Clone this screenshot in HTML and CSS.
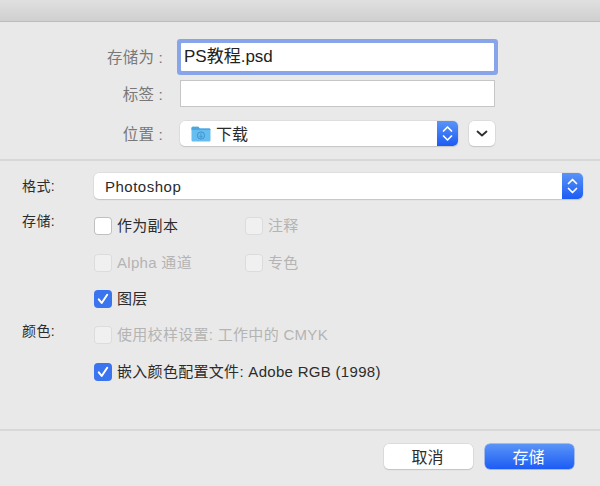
FILE: index.html
```html
<!DOCTYPE html>
<html lang="zh">
<head>
<meta charset="utf-8">
<title>存储为</title>
<link rel="stylesheet" href="styles.css">
</head>
<body>
<div class="dialog">
  <div class="titlebar"></div>
  <section class="top">
    <div class="top-row row-name">
      <span class="top-label">存储为<span class="colon">:</span></span>
      <div class="field focused">PS教程.psd</div>
    </div>
    <div class="top-row row-tag">
      <span class="top-label">标签<span class="colon">:</span></span>
      <div class="field"></div>
    </div>
    <div class="top-row row-where">
      <span class="top-label">位置<span class="colon">:</span></span>
      <div class="where-controls">
        <div class="popup where-popup">
          <svg class="folder" viewBox="0 0 20 16" width="20" height="16">
            <path d="M0.5 2.2C0.5 1.2 1 .7 2 .7h4.6c.8 0 1.1.3 1.6 1l.5.7h9.3c.9 0 1.5.5 1.5 1.5v10c0 1-.6 1.6-1.5 1.6H2c-1 0-1.5-.6-1.5-1.6z" fill="#66bdf0"/>
            <path d="M.5 4h19v-.2c0-.9-.6-1.4-1.5-1.4H8.700l-.5-.7c-.5-.7-.8-1-1.600-1H2C1 .7.500 1.200.500 2.200z" fill="#4ba6e2"/>
            <circle cx="10" cy="9.500" r="3.600" fill="none" stroke="#3f93cf" stroke-width="1"/>
            <path d="M10 7.500v3.800M8.300 9.800 10 11.500l1.700-1.700" fill="none" stroke="#3f93cf" stroke-width="1"/>
          </svg>
          <span class="popup-text where-text">下载</span>
          <span class="stepper">
            <svg viewBox="0 0 21 25" width="21" height="25"><path d="M6.500 10 10.500 6l4 4M6.500 15l4 4 4-4" fill="none" stroke="#fff" stroke-width="1.700" stroke-linecap="round" stroke-linejoin="round"/></svg>
          </span>
        </div>
        <button class="chevron-btn" type="button">
          <svg viewBox="0 0 26 25" width="26" height="25"><path d="M8.500 10.500 13 14.500l4.500-4" fill="none" stroke="#2e2e2e" stroke-width="1.800" stroke-linecap="round" stroke-linejoin="round"/></svg>
        </button>
      </div>
    </div>
  </section>
  <hr class="rule rule-top">
  <section class="options">
    <span class="opt-label">格式:</span>
    <div class="popup format-popup">
      <span class="popup-text">Photoshop</span>
      <span class="stepper">
        <svg viewBox="0 0 21 26" width="21" height="26"><path d="M6.500 10.500 10.500 6.500l4 4M6.500 15.500l4 4 4-4" fill="none" stroke="#fff" stroke-width="1.700" stroke-linecap="round" stroke-linejoin="round"/></svg>
      </span>
    </div>

    <span class="opt-label label-store">存储:</span>
    <div class="checks">
      <label class="check"><span class="box"></span><span class="check-text">作为副本</span></label>
      <label class="check off"><span class="box"></span><span class="check-text">注释</span></label>
      <label class="check off"><span class="box"></span><span class="check-text">Alpha 通道</span></label>
      <label class="check off"><span class="box"></span><span class="check-text">专色</span></label>
      <label class="check"><span class="box on"><svg viewBox="0 0 18 18" width="18" height="18"><path d="M4.800 9.300 7.700 13 13.200 4.800" fill="none" stroke="#fff" stroke-width="2" stroke-linecap="round" stroke-linejoin="round"/></svg></span><span class="check-text">图层</span></label>
    </div>

    <span class="opt-label label-color">颜色:</span>
    <div class="checks-one">
      <label class="check off"><span class="box"></span><span class="check-text">使用校样设置: 工作中的 CMYK</span></label>
      <label class="check"><span class="box on"><svg viewBox="0 0 18 18" width="18" height="18"><path d="M4.800 9.300 7.700 13 13.200 4.800" fill="none" stroke="#fff" stroke-width="2" stroke-linecap="round" stroke-linejoin="round"/></svg></span><span class="check-text">嵌入颜色配置文件: Adobe RGB (1998)</span></label>
    </div>
  </section>
  <hr class="rule rule-bottom">
  <footer class="actions">
    <button class="btn" type="button">取消</button>
    <button class="btn primary" type="button">存储</button>
  </footer>
</div>
</body>
</html>
```
FILE: styles.css
```css
* { box-sizing: border-box; }
html, body { margin: 0; padding: 0; }
body {
  width: 600px;
  height: 486px;
  overflow: hidden;
  background: #e9e9e9;
  font-family: "Liberation Sans", "Noto Sans CJK SC", sans-serif;
  color: #2c2c2c;
}
.dialog { display: flex; flex-direction: column; height: 486px; }
.titlebar {
  height: 22px;
  background: linear-gradient(#e0e0e0, #cfcfcf);
  border-bottom: 1px solid #bdbdbd;
}
.top { display: flex; flex-direction: column; padding: 21px 105px 0 0; }
.top-row { display: grid; grid-template-columns: 165px 315px; column-gap: 15px; align-items: center; }
.top-label { font-size: 15.500px; letter-spacing: .3px; color: #787878; text-align: right; line-height: 22px; padding-top: 2px; padding-right: 2px; }
.colon { margin-left: 4px; }
.row-name { height: 25px; }
.row-tag { height: 27px; margin-top: 12px; }
.row-where { height: 25px; margin-top: 14px; }
.field {
  height: 100%;
  background: #fff;
  border: 1px solid #c6c6c6;
  font-size: 17px;
  line-height: 23px;
  padding-left: 3px;
}
.focused {
  width: 313px;
  margin-left: 1px;
  border: 0;
  box-shadow: 0 0 0 4px #88a5ea;
  border-radius: 1px;
  line-height: 28px;
  color: #222;
}
.where-controls { display: flex; gap: 11px; height: 25px; }
.popup {
  display: flex;
  align-items: center;
  background: #fff;
  border-radius: 5px;
  box-shadow: 0 0 0 .5px #d4d4d4, 0 1px 1px #b9b9b9;
  overflow: hidden;
}
.where-popup { width: 278px; height: 25px; padding-left: 11px; }
.folder { flex: none; margin-right: 5px; }
.popup-text { flex: 1; font-size: 15px; letter-spacing: .5px; color: #2a2a2a; }
.where-text { font-size: 16px; letter-spacing: 0; line-height: 27px; height: 25px; }
.stepper {
  flex: none;
  width: 21px;
  align-self: stretch;
  background: linear-gradient(#5a94f7, #1c5cf4);
  display: flex;
  align-items: center;
  justify-content: center;
}
.chevron-btn {
  width: 26px;
  height: 25px;
  padding: 0;
  background: #fff;
  border: 0;
  border-radius: 5px;
  box-shadow: 0 0 0 .5px #d0d0d0, 0 1px 1px #bcbcbc;
  display: block;
}
.rule { height: 2px; margin: 0; border: 0; background: #d8d8d8; }
.rule-top { margin-top: 13px; }
.options {
  display: grid;
  grid-template-columns: 94px 1fr;
  grid-template-rows: 26px auto auto;
  padding: 12px 17px 0 0;
}
.opt-label { font-size: 14px; line-height: 20px; padding-left: 22px; padding-top: 3px; white-space: nowrap; color: #2c2c2c; letter-spacing: .4px; }
.format-popup { height: 26px; }
.format-popup .popup-text { padding-left: 11px; }
.label-store { margin-top: 9px; }
.label-color { margin-top: 10px; }
.checks {
  display: grid;
  grid-template-columns: 151px 1fr;
  row-gap: 18.500px;
  margin-top: 18px;
}
.checks-one { display: flex; flex-direction: column; gap: 18.500px; margin-top: 18px; }
.check { display: flex; align-items: center; gap: 5px; height: 18px; font-size: 15px; letter-spacing: .3px; white-space: nowrap; color: #2c2c2c; }
.check-text { line-height: 18px; height: 18px; }
.box {
  flex: none;
  width: 18px;
  height: 18px;
  background: #fff;
  border-radius: 4px;
  box-shadow: inset 0 0 0 1px #c0c0c0;
}
.off { color: #b4b4b4; }
.off .box { background: #f0f0f0; box-shadow: inset 0 0 0 1px #dcdcdc; }
.box.on { background: #3a74ee; box-shadow: none; }
.box svg { display: block; }
.rule-bottom { margin-top: 48px; }
.actions { display: flex; justify-content: flex-end; gap: 12px; padding: 13px 26px 0 0; }
.btn {
  width: 89px;
  height: 25px;
  padding: 0 2px 2px 0;
  border: 0;
  border-radius: 5px;
  background: #fff;
  box-shadow: 0 0 0 .5px #cfcfcf, 0 1px 1px #b8b8b8;
  font: 16px "Liberation Sans", "Noto Sans CJK SC", sans-serif;
  color: #2c2c2c;
}
.primary {
  background: linear-gradient(#5a94f7, #1c5cf4);
  box-shadow: 0 0 0 .5px #5d8cec;
  color: #fff;
}
```
